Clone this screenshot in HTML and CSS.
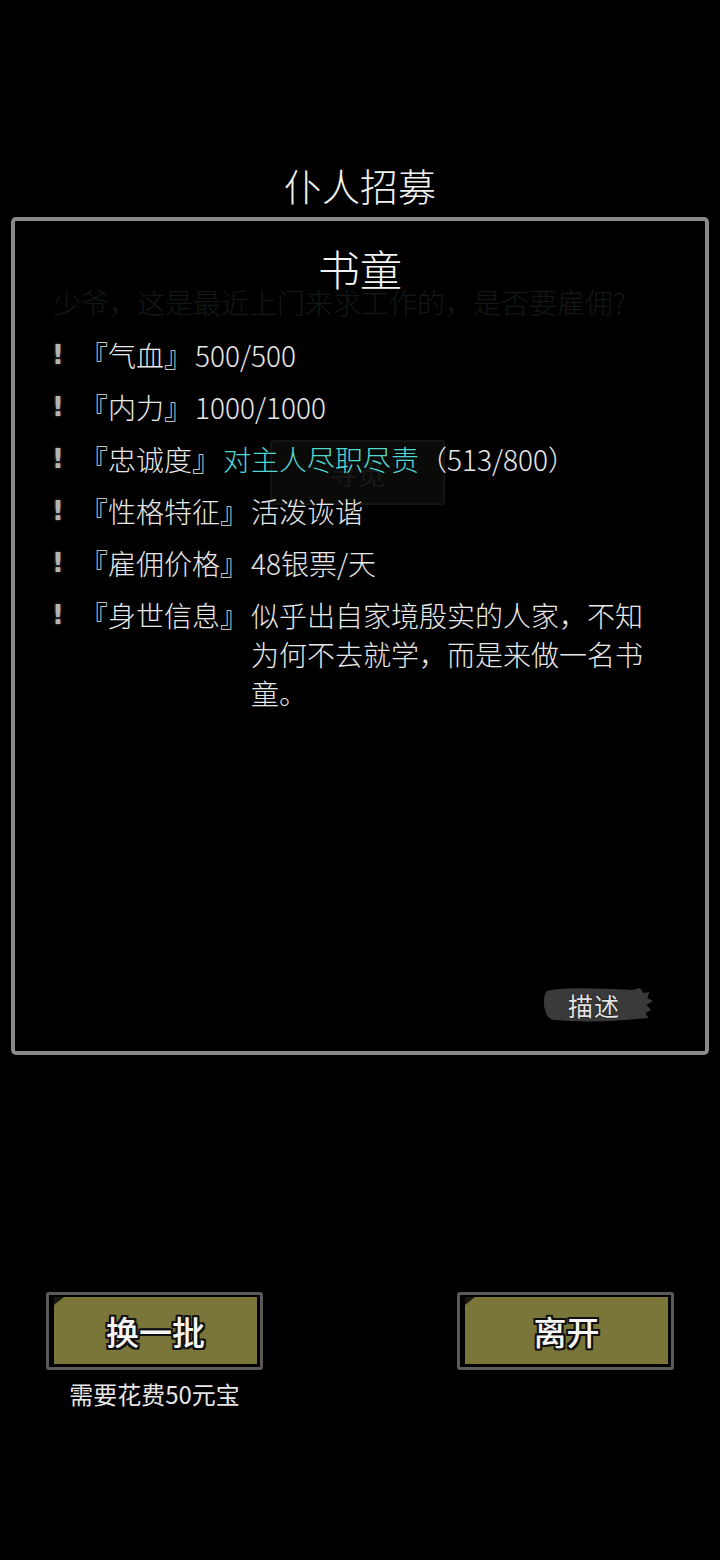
FILE: index.html
```html
<!DOCTYPE html>
<html lang="zh">
  <head>
    <meta charset="UTF-8" />
    <meta name="viewport" content="width=device-width, initial-scale=1.0" />
    <title>仆人招募</title>
    <link rel="stylesheet" href="styles.css">
  </head>
  <body>
    <div class="screen">
      <h1 class="title">仆人招募</h1>
      <section class="panel">
        <h2 class="name">书童</h2>
        <p class="hint">少爷，这是最近上门来求工作的，是否要雇佣?</p>
        <div class="ghost-btn">寻觅</div>
        <ul class="stats">
          <li>
            <span class="mark">!</span>
            <span class="label">『气血』</span>
            <span class="value">500/500</span>
          </li>
          <li>
            <span class="mark">!</span>
            <span class="label">『内力』</span>
            <span class="value">1000/1000</span>
          </li>
          <li>
            <span class="mark">!</span>
            <span class="label">『忠诚度』</span>
            <span class="value"><span class="loyal">对主人尽职尽责</span>（513/800）</span>
          </li>
          <li>
            <span class="mark">!</span>
            <span class="label">『性格特征』</span>
            <span class="value">活泼诙谐</span>
          </li>
          <li>
            <span class="mark">!</span>
            <span class="label">『雇佣价格』</span>
            <span class="value">48银票/天</span>
          </li>
          <li>
            <span class="mark">!</span>
            <span class="label">『身世信息』</span>
            <span class="value">似乎出自家境殷实的人家，不知为何不去就学，而是来做一名书童。</span>
          </li>
        </ul>
        <div class="panel-foot">
          <button class="desc-btn">
            <svg class="brush" viewBox="0 0 120 40" preserveAspectRatio="none">
              <path d="M6 6 C20 2 60 3 96 5 L104 3 L108 8 L114 7 L112 13 L118 16 L111 20 L116 25 L110 28 L113 33 L100 34 C70 37 40 37 14 35 C8 34 5 30 4 24 C2 18 3 10 6 6 Z" fill="#3a3a3a" />
            </svg>
            <span class="desc-text">描述</span>
          </button>
        </div>
      </section>
      <div class="actions">
        <div class="action">
          <button class="olive-btn"><span class="olive-face">换一批</span></button>
          <p class="cost">需要花费50元宝</p>
        </div>
        <div class="action">
          <button class="olive-btn"><span class="olive-face">离开</span></button>
        </div>
      </div>
    </div>
  </body>
</html>
```

FILE: styles.css
```css
body {
  margin: 0;
  background-color: black;
  color: #e8e8e8;
  font-family: "Noto Sans CJK SC", "Noto Sans", sans-serif;
}
.screen {
  width: 720px;
  height: 1560px;
  padding-top: 160px;
  box-sizing: border-box;
}
.title {
  margin: 0 0 8px;
  text-align: center;
  font-size: 38px;
  font-weight: 300;
  line-height: 49px;
  color: #f2f2f2;
}
.panel {
  position: relative;
  margin: 0 11px;
  height: 838px;
  box-sizing: border-box;
  border: 4px solid #8a8a8a;
  border-radius: 5px;
  padding-top: 25px;
  display: flex;
  flex-direction: column;
}
.name {
  margin: 0;
  text-align: center;
  font-size: 42px;
  font-weight: 300;
  line-height: 44px;
  color: #f4f4f4;
}
.hint {
  margin: -2px 0 0 38px;
  font-size: 28px;
  font-weight: 300;
  line-height: 28px;
  color: #121816;
}
.ghost-btn {
  position: absolute;
  left: 255px;
  top: 219px;
  width: 175px;
  height: 65px;
  box-sizing: border-box;
  border: 2px solid #141414;
  border-radius: 3px;
  background-color: #0a0a08;
  color: #181818;
  font-size: 28px;
  display: flex;
  align-items: center;
  justify-content: center;
}
.stats {
  position: relative;
  list-style: none;
  margin: 20px 0 0;
  padding: 0 0 0 35px;
  display: flex;
  flex-direction: column;
  gap: 13px;
  font-size: 28px;
  font-weight: 300;
  line-height: 39px;
}
.stats li {
  display: flex;
}
.mark {
  width: 16px;
  margin-right: 14px;
  text-align: center;
  font-family: "DejaVu Sans", sans-serif;
  font-weight: bold;
  font-size: 26px;
  color: #b4b4b4;
  text-shadow: 0 0 3px #666;
}
.label {
  white-space: nowrap;
  margin-right: 3px;
}
.value {
  flex: 1;
  padding-right: 50px;
}
.loyal {
  color: #52d8d0;
}
.panel-foot {
  margin-top: auto;
  padding: 0 50px 26px 0;
  display: flex;
  justify-content: flex-end;
}
.desc-btn {
  position: relative;
  width: 114px;
  height: 40px;
  padding: 0;
  border: none;
  background: none;
  display: flex;
  align-items: center;
  justify-content: center;
}
.brush {
  position: absolute;
  inset: 0;
  width: 100%;
  height: 100%;
  filter: blur(0.6px);
}
.desc-text {
  position: relative;
  margin-right: 8px;
  font-family: "Noto Sans CJK SC", sans-serif;
  font-size: 25px;
  letter-spacing: 1px;
  color: #e2e2e2;
  text-shadow: 0 0 2px #000;
}
.actions {
  margin-top: 237px;
  padding: 0 46px;
  display: flex;
  justify-content: space-between;
  align-items: flex-start;
}
.action {
  width: 217px;
  display: flex;
  flex-direction: column;
  align-items: center;
}
.olive-btn {
  position: relative;
  width: 217px;
  height: 78px;
  box-sizing: border-box;
  border: 3px solid #5a5a5a;
  border-radius: 3px;
  background-color: black;
  padding: 2px 3px 3px 5px;
  display: flex;
}
.olive-face {
  position: relative;
  flex: 1;
  background-color: #7a7538;
  display: flex;
  align-items: center;
  justify-content: center;
  font-family: "Noto Sans CJK SC", sans-serif;
  font-size: 33px;
  font-weight: 500;
  color: #f6f6f6;
  text-shadow: 2px 0 0 #111, -2px 0 0 #111, 0 2px 0 #111, 0 -2px 0 #111,
    2px 2px 0 #111, -2px -2px 0 #111, 2px -2px 0 #111, -2px 2px 0 #111;
}
.olive-face::before {
  content: "";
  position: absolute;
  left: 0;
  top: 0;
  border-top: 8px solid #1a1a10;
  border-right: 10px solid transparent;
}
.cost {
  margin: 9px 0 0;
  font-size: 24px;
  line-height: 30px;
  color: #e6e6e6;
}
```
